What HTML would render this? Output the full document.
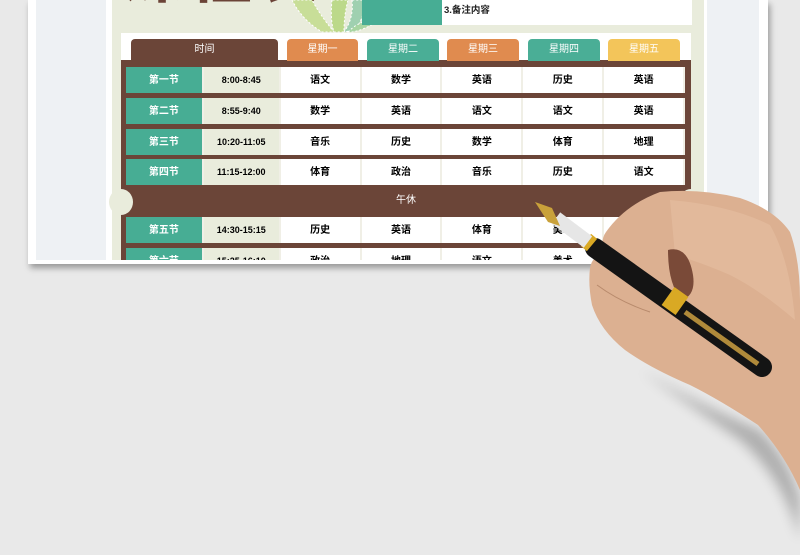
<!DOCTYPE html><html><head><meta charset="utf-8"><style>
*{margin:0;padding:0;box-sizing:border-box}
body{width:800px;height:555px;overflow:hidden;background:#e9e9e9;position:relative;font-family:"Liberation Sans","Noto Sans CJK SC",sans-serif}
.abs{position:absolute}
.paper{left:28px;top:0;width:740px;height:264px;background:#fff;box-shadow:2px 4px 6px rgba(0,0,0,.35)}
.side{top:0;height:260px;background:#eef1f4}
.cream{left:112px;top:0;width:592px;height:260px;background:#e9ecdc;overflow:hidden}
.tab{top:39px;height:22px;border-radius:4px 4px 0 0;color:#fff;font-size:10px;text-align:center;line-height:21px}
.row{left:126px;width:559px;height:26px;background:#fff;display:flex}
.row div{font-size:10px;font-weight:bold;text-align:center;line-height:27px;border-right:2px solid #f0efe6}
.c1{width:78px;background:#47ad94;color:#fff}
.c2{width:77px;background:#e9ecdc;font-size:9px!important}
.c{width:81px}
</style></head><body>
<div class="abs paper"></div>
<div class="abs side" style="left:36px;width:70px"></div>
<div class="abs side" style="left:707px;width:52px"></div>
<div class="abs cream">
  <div class="abs" style="left:8px;top:-76px;font-size:64px;font-weight:bold;color:#6b4337;letter-spacing:4px">课程表</div>
  <svg class="abs" style="left:160px;top:0" width="110" height="33"><g fill="#bcd98a" stroke="#fff" stroke-width="1" stroke-dasharray="2 2"><path d="M20 0 Q30 20 50 32 L62 32 Q48 15 40 0Z" fill="#c8de98"/><path d="M60 0 Q58 20 62 32 L72 32 Q72 15 76 0Z"/><path d="M80 0 Q82 18 72 32 L84 30 Q92 15 96 0Z" fill="#9fd0b0"/><path d="M76 32 Q90 18 104 22 Q92 30 80 32Z" fill="#a8d5a2"/></g></svg>
  <div class="abs" style="left:250px;top:0;width:80px;height:25px;background:#47ad94"></div>
  <div class="abs" style="left:330px;top:0;width:250px;height:25px;background:#fff;font-size:9.5px;font-weight:bold;padding:2px 2px;color:#222">3.备注内容</div>
  <div class="abs" style="left:9px;top:33px;width:570px;height:240px;background:#fff"></div>
</div>
<div class="abs" style="left:121px;top:60px;width:570px;height:200px;background:#6b4538"></div>
<div class="abs tab" style="left:131px;width:147px;background:#6b4538;height:24px">时间</div>
<div class="abs tab" style="left:287px;width:71px;background:#e08b4f">星期一</div>
<div class="abs tab" style="left:367px;width:72px;background:#4aae96">星期二</div>
<div class="abs tab" style="left:447px;width:72px;background:#e08b4f">星期三</div>
<div class="abs tab" style="left:528px;width:72px;background:#4aae96">星期四</div>
<div class="abs tab" style="left:608px;width:72px;background:#f3c55a">星期五</div>
<div class="abs row" style="top:67px"><div class="c1">第一节</div><div class="c2">8:00-8:45</div><div class="c">语文</div><div class="c">数学</div><div class="c">英语</div><div class="c">历史</div><div class="c">英语</div></div>
<div class="abs row" style="top:98px"><div class="c1">第二节</div><div class="c2">8:55-9:40</div><div class="c">数学</div><div class="c">英语</div><div class="c">语文</div><div class="c">语文</div><div class="c">英语</div></div>
<div class="abs row" style="top:129px"><div class="c1">第三节</div><div class="c2">10:20-11:05</div><div class="c">音乐</div><div class="c">历史</div><div class="c">数学</div><div class="c">体育</div><div class="c">地理</div></div>
<div class="abs row" style="top:159px"><div class="c1">第四节</div><div class="c2">11:15-12:00</div><div class="c">体育</div><div class="c">政治</div><div class="c">音乐</div><div class="c">历史</div><div class="c">语文</div></div>
<div class="abs" style="left:121px;top:186px;width:570px;height:30px;color:#fff;font-size:10px;text-align:center;line-height:30px">午休</div>
<div class="abs" style="left:109px;top:189px;width:24px;height:26px;border-radius:50%;background:#e9ecdc"></div>
<div class="abs" style="left:679px;top:189px;width:24px;height:26px;border-radius:50%;background:#e9ecdc"></div>
<div class="abs row" style="top:217px"><div class="c1">第五节</div><div class="c2">14:30-15:15</div><div class="c">历史</div><div class="c">英语</div><div class="c">体育</div><div class="c">美术</div><div class="c">数学</div></div>
<div class="abs" style="left:112px;top:247px;width:592px;height:13px;overflow:hidden"><div class="abs row" style="left:14px;top:1px"><div class="c1">第六节</div><div class="c2">15:25-16:10</div><div class="c">政治</div><div class="c">地理</div><div class="c">语文</div><div class="c">美术</div><div class="c">体育</div></div></div>
<div class="abs" style="left:112px;top:260px;width:600px;height:4px;background:#fff"></div>
<svg class="abs" style="left:0;top:0" width="800" height="555">
<defs><filter id="b"><feGaussianBlur stdDeviation="6"/></filter></defs>
<path d="M640 370 Q700 405 760 430 Q790 460 800 500 L800 540 Q785 480 740 440 Z" fill="#000" opacity=".25" filter="url(#b)"/>
<path d="M590 268 Q592 256 604 254 Q600 240 606 232 Q625 205 660 192 Q700 188 740 198 Q775 210 790 232 Q800 260 800 300 L800 490 Q785 455 758 425 Q720 400 690 385 Q650 368 625 350 Q600 330 592 305 Q588 285 590 268 Z" fill="#dcb091"/>
<path d="M670 200 Q730 205 770 225 Q790 260 795 320 Q760 290 730 275 Q700 262 675 255Z" fill="#e6c0a2" opacity=".6"/>
<path d="M668 250 Q688 245 693 275 Q696 295 682 300 Q668 285 668 250Z" fill="#7a4a38"/>
<path d="M597 285 Q620 302 650 312" stroke="#b88a6c" fill="none"/>
<line x1="595" y1="248" x2="762" y2="367" stroke="#141414" stroke-width="20" stroke-linecap="round"/>
<line x1="685" y1="312" x2="758" y2="364" stroke="#b08a3a" stroke-width="5"/>
<line x1="668" y1="296" x2="682" y2="306" stroke="#d9a924" stroke-width="22"/>
<line x1="586" y1="240" x2="592" y2="245" stroke="#d9a924" stroke-width="16"/>
<line x1="556" y1="218" x2="588" y2="242" stroke="#e6e6e6" stroke-width="14"/>
<path d="M535 202 L552 208 L560 226 L548 222Z" fill="#c9a13a"/>
</svg>
</body></html>
